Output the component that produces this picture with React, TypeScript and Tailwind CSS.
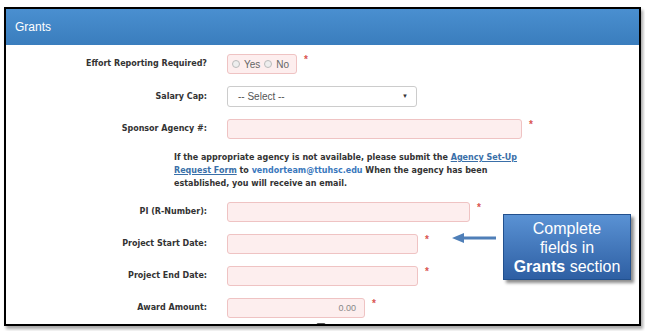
import React from 'react';

const Star = () => (
  <span className="ml-[7px] -translate-y-[4px] text-[10px] leading-none font-bold text-[#d9534f]">*</span>
);

const Field = ({ label, width, value }: { label: string; width: string; value?: string }) => (
  <div className="flex items-center h-[20px]">
    <div className="w-[201px] text-right text-[8px] font-bold text-[#333] font-['DejaVu_Sans',Verdana,sans-serif]">
      {label}
    </div>
    <div className="ml-[20px] flex items-center h-full">
      <div
        className={`${width} h-[20px] rounded-[3px] border border-[#efc3c3] bg-[#fdeeee] text-right pr-[8px] text-[9px] leading-[18px] text-[#888]`}
      >
        {value}
      </div>
      <Star />
    </div>
  </div>
);

export default function App() {
  return (
    <div className="w-[645px] h-[331px] bg-white overflow-hidden font-['Liberation_Sans',Arial,sans-serif]">
      <div className="relative ml-[4px] mt-[7px] w-[637px] h-[319px] border-2 border-black bg-white shadow-[2px_3px_3px_rgba(0,0,0,0.35)] overflow-hidden">
        {/* header */}
        <div className="h-[36px] bg-gradient-to-b from-[#4a8fd0] to-[#3a7dbd] flex items-center pl-[9px] text-[12px] text-white">
          Grants
        </div>

        {/* form body */}
        <div className="pt-[9px] flex flex-col gap-[12px]">
          <div className="flex items-center h-[20px]">
            <div className="w-[201px] text-right text-[8px] font-bold text-[#333] font-['DejaVu_Sans',Verdana,sans-serif]">
              Effort Reporting Required?
            </div>
            <div className="ml-[20px] flex items-center h-full">
              <div className="h-[20px] w-[70px] rounded-[3px] border border-[#efc3c3] bg-[#fdeeee] flex items-center pl-[4px] gap-[4px] text-[10px] text-[#666]">
                <span className="w-[8px] h-[8px] rounded-full border border-[#bbb] bg-[#eee]" />
                <span>Yes</span>
                <span className="w-[8px] h-[8px] rounded-full border border-[#bbb] bg-[#eee]" />
                <span>No</span>
              </div>
              <Star />
            </div>
          </div>

          <div className="flex items-center h-[21px]">
            <div className="w-[201px] text-right text-[8px] font-bold text-[#333] font-['DejaVu_Sans',Verdana,sans-serif]">
              Salary Cap:
            </div>
            <div className="ml-[20px] w-[190px] h-[21px] rounded-[3px] border border-[#ccc] bg-white flex items-center justify-between pl-[10px] pr-[8px] text-[10px] text-[#555]">
              <span>-- Select --</span>
              <span className="text-[6px] text-[#333]">▼</span>
            </div>
          </div>

          <Field label="Sponsor Agency #:" width="w-[295px]" />

          <p className="ml-[168px] w-[345px] text-[8px] font-bold leading-[13px] text-[#333] font-['DejaVu_Sans',Verdana,sans-serif]">
            If the appropriate agency is not available, please submit the{' '}
            <span className="text-[#3a6fa8] underline">Agency Set-Up Request Form</span> to{' '}
            <span className="text-[#3a78bd]">vendorteam@ttuhsc.edu</span> When the agency has been established, you
            will receive an email.
          </p>

          <Field label="PI (R-Number):" width="w-[243px]" />
          <Field label="Project Start Date:" width="w-[191px]" />
          <Field label="Project End Date:" width="w-[191px]" />
          <Field label="Award Amount:" width="w-[138px]" value="0.00" />

          <div className="-mt-[7px] ml-[310px] w-[10px] h-[8px] rounded-[2px] border border-[#555] bg-white" />
        </div>

        {/* annotation arrow */}
        <svg className="absolute left-[446px] top-[223px]" width="46" height="12" viewBox="0 0 46 12">
          <path d="M0 6 L12 1 L12 4.5 L44 4.5 L44 7.5 L12 7.5 L12 11 Z" fill="#4f7fb8" />
        </svg>

        {/* callout */}
        <div className="absolute left-[497px] top-[205px] w-[128px] h-[66px] border border-[#22508d] bg-gradient-to-b from-[#5a92d4] to-[#2e5fa3] shadow-[3px_3px_3px_rgba(0,0,0,0.45)] flex flex-col items-center justify-center text-[16px] leading-[19px] text-white">
          <span>Complete</span>
          <span>fields in</span>
          <span>
            <b>Grants</b> section
          </span>
        </div>
      </div>
    </div>
  );
}
